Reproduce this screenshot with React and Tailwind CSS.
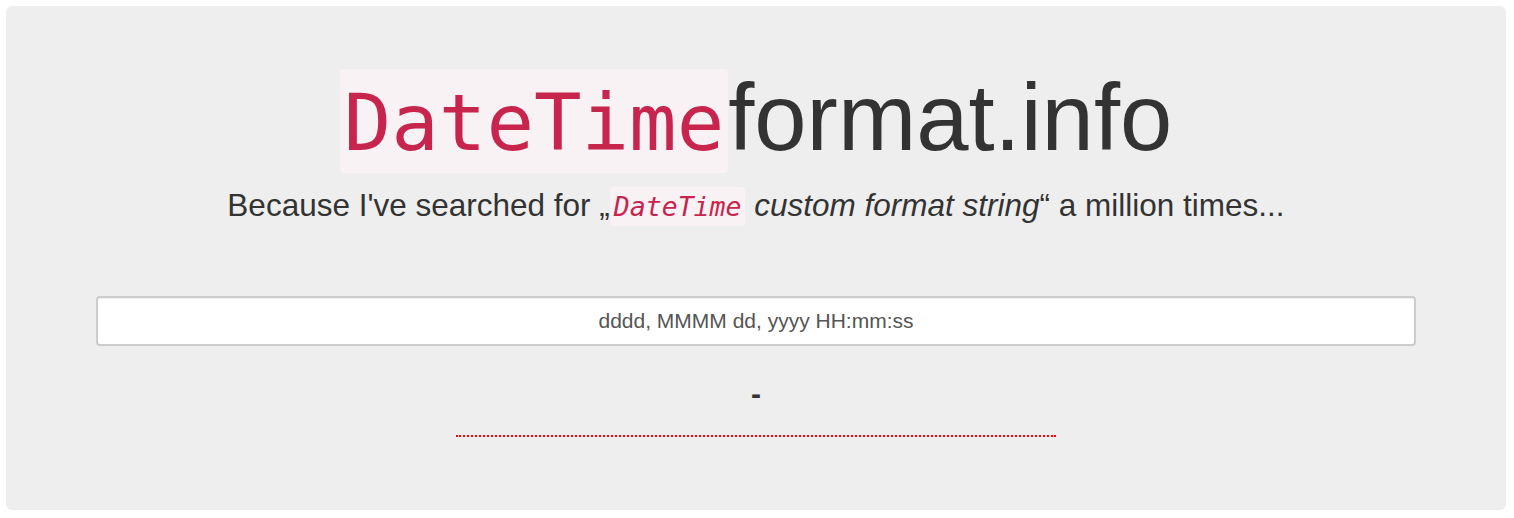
import React, { useState } from 'react';

const sans = { fontFamily: '"Liberation Sans", Arial, sans-serif' };

function Code({ children, className = '' }) {
  return (
    <code
      className={`bg-[#f9f2f4] text-[#c7254e] rounded-[4px] font-['DejaVu_Sans_Mono',monospace] ${className}`}
    >
      {children}
    </code>
  );
}

export default function App() {
  const [format, setFormat] = useState('');

  return (
    <div className="bg-white p-[6px] text-[#333] font-['Liberation_Sans',Arial,sans-serif]" style={sans}>
      <div className="h-[504px] w-[1500px] rounded-[6px] bg-[#eeeeee] px-[90px] pt-[63px] text-center">
        <h1 className="text-[94px] leading-none font-normal whitespace-nowrap">
          <Code className="inline-block px-[4px] pt-[4px] text-[79px] leading-[100px]">DateTime</Code>
          <span>format.info</span>
        </h1>

        <p className="mt-[10px] text-[31.5px] leading-[45px] whitespace-nowrap">
          Because I've searched for „
          <Code className="px-[4px] py-[4px] text-[26.5px] italic">DateTime</Code>{' '}
          <em>custom format string</em>“ a million times...
        </p>

        <input
          type="text"
          value={format}
          onChange={e => setFormat(e.target.value)}
          placeholder="dddd, MMMM dd, yyyy HH:mm:ss"
          className="mt-[67px] block h-[50px] w-[1320px] rounded-[4px] border-2 border-[#cccccc] bg-white text-center text-[21px] text-[#555] placeholder:text-[#555] shadow-[inset_0_1px_1px_rgba(0,0,0,0.075)] outline-none"
        />

        <div className="mt-[31px] text-[30px] leading-[33px] font-bold">-</div>

        <div className="mx-auto mt-[25px] h-0 w-[600px] border-b-2 border-dotted border-[#ff0000]" />
      </div>
    </div>
  );
}
